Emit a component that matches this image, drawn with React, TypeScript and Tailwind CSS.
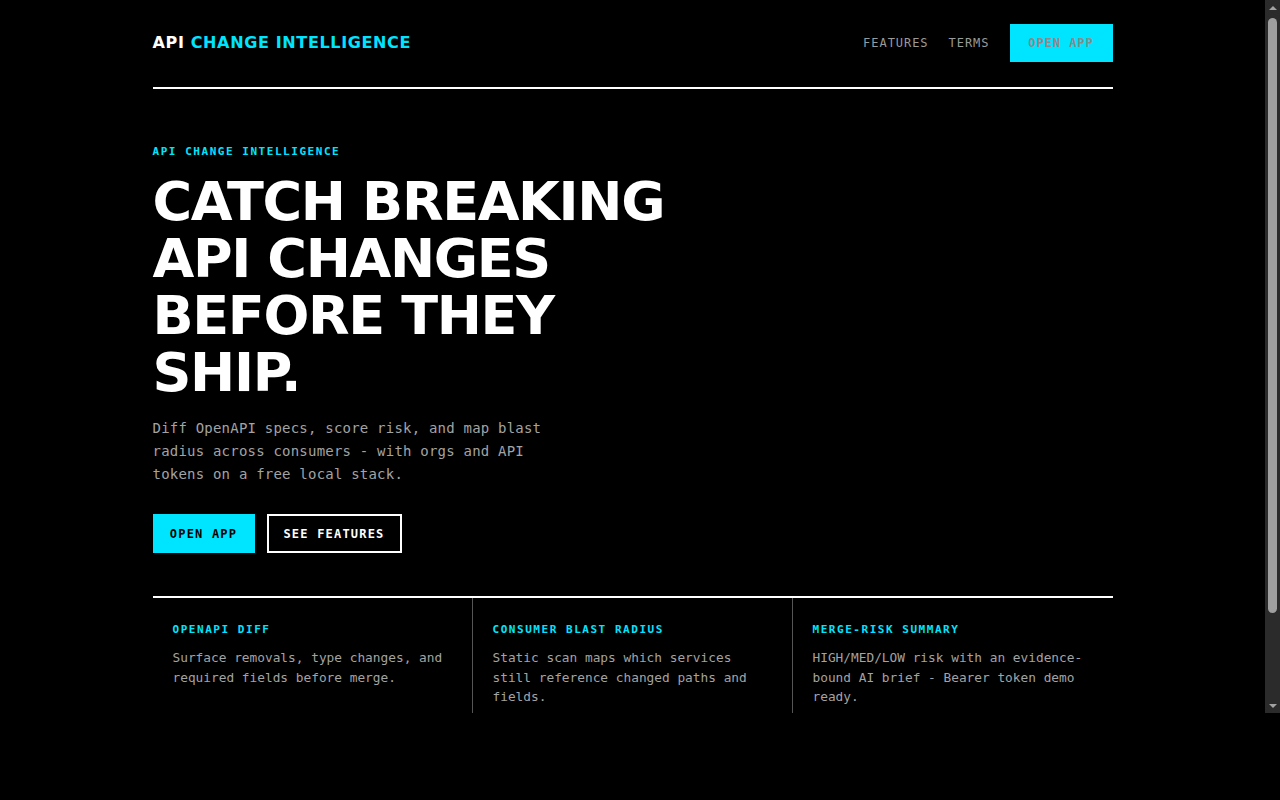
const mono = "font-['DejaVu_Sans_Mono','Liberation_Mono',monospace]";
const sans = "font-['DejaVu_Sans','Verdana',sans-serif]";

const features = [
  {
    title: "OPENAPI DIFF",
    body: "Surface removals, type changes, and required fields before merge.",
  },
  {
    title: "CONSUMER BLAST RADIUS",
    body: "Static scan maps which services still reference changed paths and fields.",
  },
  {
    title: "MERGE-RISK SUMMARY",
    body: "HIGH/MED/LOW risk with an evidence-bound AI brief - Bearer token demo ready.",
  },
];

function Header() {
  return (
    <header className="flex items-center justify-between border-b-2 border-white pt-6 pb-[25px]">
      <a href="#" className={`${sans} text-[16px] font-bold tracking-[0.04em] text-white`}>
        API <span className="text-[#00e5ff]">CHANGE INTELLIGENCE</span>
      </a>
      <nav className={`${mono} flex items-center gap-5 text-[12px] tracking-[0.08em] text-[#9a9a9a]`}>
        <a href="#features">FEATURES</a>
        <a href="#terms">TERMS</a>
        <a
          href="#app"
          className="flex h-[38px] w-[103px] items-center justify-center bg-[#00e5ff] font-bold text-[#8a8a8a]"
        >
          OPEN APP
        </a>
      </nav>
    </header>
  );
}

function Hero() {
  return (
    <section className="pt-[55px]">
      <p className={`${mono} text-[11px] leading-4 font-bold tracking-[0.14em] text-[#00e5ff]`}>
        API CHANGE INTELLIGENCE
      </p>
      <h1
        className={`${sans} mt-[13px] max-w-[540px] text-[54px] leading-[57px] font-bold tracking-[-0.025em] text-white`}
      >
        CATCH BREAKING API CHANGES BEFORE THEY SHIP.
      </h1>
      <p className={`${mono} mt-4 max-w-[410px] text-[14px] leading-[23px] tracking-[0.015em] text-[#a3a3a3]`}>
        Diff OpenAPI specs, score risk, and map blast radius across consumers - with orgs and API
        tokens on a free local stack.
      </p>
      <div className={`${mono} mt-7 flex gap-3 text-[12px] font-bold tracking-[0.1em]`}>
        <a href="#app" className="flex h-[39px] w-[102px] items-center justify-center bg-[#00e5ff] text-black">
          OPEN APP
        </a>
        <a
          href="#features"
          className="flex h-[39px] w-[135px] items-center justify-center border-2 border-white text-white"
        >
          SEE FEATURES
        </a>
      </div>
    </section>
  );
}

function Features() {
  return (
    <section id="features" className="mt-[43px] grid grid-cols-3 border-t-2 border-white">
      {features.map((f, i) => (
        <div key={f.title} className={`px-5 pt-6 pb-8 ${i < 2 ? "border-r border-[#555555]" : ""}`}>
          <h3 className={`${mono} text-[11px] leading-4 font-bold tracking-[0.14em] text-[#00e5ff]`}>{f.title}</h3>
          <p className={`${mono} mt-[10px] text-[12.8px] leading-[19.5px] text-[#a3a3a3]`}>{f.body}</p>
        </div>
      ))}
    </section>
  );
}

// drawn stand-in for the dark browser scrollbar of the scroll pane
function ScrollBar() {
  return (
    <div className="flex w-[15px] shrink-0 flex-col items-center bg-[#2b2b2b]">
      <div className="flex h-[15px] items-center justify-center">
        <div className="h-0 w-0 border-x-[4px] border-b-[4px] border-x-transparent border-b-[#a3a3a3]" />
      </div>
      <div className="mt-[3px] h-[595px] w-[9px] rounded-full bg-[#9f9f9f]" />
      <div className="flex-1" />
      <div className="flex h-[15px] items-center justify-center">
        <div className="h-0 w-0 border-x-[4px] border-t-[4px] border-x-transparent border-t-[#a3a3a3]" />
      </div>
    </div>
  );
}

export default function App() {
  return (
    <div className="min-h-screen bg-black">
      <div className="flex h-[713px] bg-black">
        <div className="min-w-0 flex-1 overflow-y-auto [scrollbar-width:none]">
          <div className="mx-auto max-w-[960px] pb-[82px]">
            <Header />
            <Hero />
            <Features />
          </div>
        </div>
        <ScrollBar />
      </div>
    </div>
  );
}
